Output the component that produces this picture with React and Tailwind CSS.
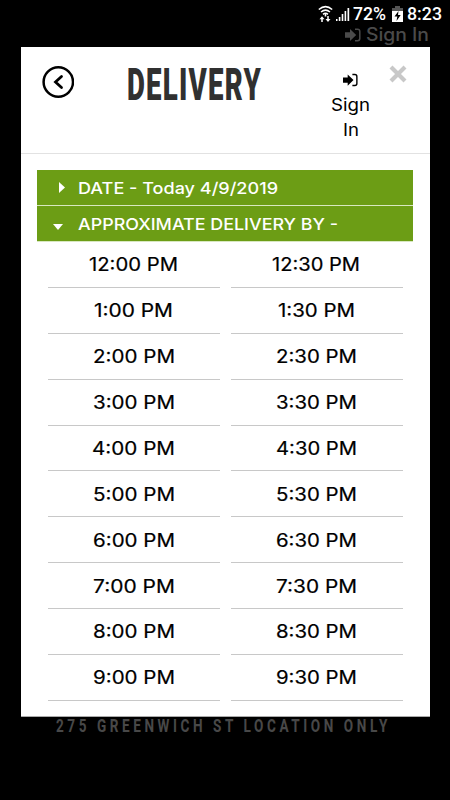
import { useLayoutEffect, useRef, useState } from "react";

const times = [
  ["12:00 PM", "12:30 PM", 89, 88], ["1:00 PM", "1:30 PM", 79, 77],
  ["2:00 PM", "2:30 PM", 82, 81], ["3:00 PM", "3:30 PM", 82, 81],
  ["4:00 PM", "4:30 PM", 83, 81], ["5:00 PM", "5:30 PM", 82, 81],
  ["6:00 PM", "6:30 PM", 82, 81], ["7:00 PM", "7:30 PM", 82, 81],
  ["8:00 PM", "8:30 PM", 82, 81], ["9:00 PM", "9:30 PM", 82, 81],
];

// Stretches a line of text horizontally to an exact width.
function Fit({ width, className = "", children }) {
  const ref = useRef(null);
  const [scale, setScale] = useState(1);
  useLayoutEffect(() => {
    setScale(width / ref.current.getBoundingClientRect().width * scale);
  }, [width]);
  return (
    <span className={"block shrink-0 whitespace-nowrap " + className} style={{ width }}>
      <span ref={ref} className="inline-block origin-left" style={{ transform: `scaleX(${scale})` }}>{children}</span>
    </span>
  );
}

function SignInIcon({ className }) {
  return (
    <svg viewBox="0 0 16 14" className={className}>
      <path d="M0 4.200h5V1l6.200 6L5 13V9.800H0z" fill="currentColor" />
      <path d="M10 1.200h2.600q2.200 0 2.200 2.200v7.200q0 2.200-2.200 2.200H10" fill="none" stroke="currentColor" strokeWidth="1.500" />
    </svg>
  );
}

function StatusBar() {
  return (
    <div className="flex h-[26px] items-center pt-px pl-[318px] text-white">
      <svg className="h-[18px] w-[15px] shrink-0" viewBox="0 0 15 18" fill="none" stroke="currentColor">
        <path d="M.8 4.5Q7.5-1.3 14.2 4.5M3 7Q7.5 3.2 12 7M5 9.3q2.500-2 5 0" strokeWidth="1.5" />
        <path d="M7.500 9v2.500" strokeWidth="1.6" />
        <path d="M4 17v-4M10 11v4" strokeWidth="1.5" />
        <path d="M1.500 14.200 4 11.200l2.500 3zM7.500 14 10 17l2.500-3z" fill="currentColor" stroke="none" />
      </svg>
      <svg className="ml-[3px] h-[14px] w-[14px] shrink-0" viewBox="0 0 14 14" fill="currentColor">
        <path d="M0 12h1.500v2H0zM2.800 10h1.600v4H2.800zM5.700 7h1.600v7H5.700zM8.600 4h1.600v10H8.600zM11.500 1h1.700v13h-1.700z" />
      </svg>
      <Fit width={33} className="ml-[3px] text-[18.5px] leading-[26px] font-medium">72%</Fit>
      <svg className="ml-[6px] h-[16px] w-[11px] shrink-0" viewBox="0 0 11 16">
        <path d="M3 0h5v2h3v3.500H0V2h3z" fill="#555" />
        <path d="M0 5h11v11H0z" fill="#fff" />
        <path d="M6.500 5 2.500 10.500h2.800L4.500 15 8.700 9H6z" fill="#000" />
      </svg>
      <Fit width={35} className="ml-[4px] text-[18.5px] leading-[26px] font-medium">8:23</Fit>
    </div>
  );
}

export default function App() {
  return (
    <div className="flex h-[800px] w-[450px] flex-col overflow-hidden bg-black font-['Roboto','Liberation_Sans',sans-serif]">
      <StatusBar />
      <div className="flex h-[21px] items-start pl-[345px] text-[#4a4a4a]">
        <SignInIcon className="mt-[2px] h-[14px] w-[16px] shrink-0" />
        <Fit width={63} className="ml-[5px] -mt-[3px] font-['Inter',sans-serif] text-[18px] leading-6 font-medium">Sign In</Fit>
      </div>
      <main className="ml-[21px] h-[670px] w-[409px] shrink-0 border-b border-[#aaa] bg-white font-['Inter',sans-serif] text-black">
        <header className="flex h-[107px] items-start border-b border-[#e2e2e2]">
          <svg className="mt-[19px] ml-[21px] size-8 shrink-0" viewBox="0 0 32 32" fill="none" stroke="currentColor">
            <circle cx="16.300" cy="16" r="14.700" strokeWidth="2.500" />
            <path d="M19.500 10.500 13.500 16l6 5.500" strokeWidth="2.800" strokeLinecap="round" />
          </svg>
          <Fit width={135} className="ml-[53px] mt-[8px] font-['Roboto',sans-serif] text-[45px] leading-[60px] font-black tracking-[2px] text-[#303030]">DELIVERY</Fit>
          <div className="ml-[67px] mt-[26px] flex w-[43px] flex-col items-center">
            <SignInIcon className="h-[14px] w-[15px]" />
            <Fit width={39} className="mt-[6px] text-[17px] leading-[25px]">Sign</Fit>
            <Fit width={16} className="text-[17px] leading-[25px]">In</Fit>
          </div>
          <svg className="mt-[18px] ml-[17px] size-[18px] shrink-0" viewBox="0 0 18 18" stroke="#c8c8c8" strokeWidth="4.200">
            <path d="m2 2 14 14M16 2 2 16" />
          </svg>
        </header>
        <section className="mt-[16px] ml-[16px] w-[376px] text-[16.5px] font-medium text-white">
          <div className="flex h-[36px] items-center border-b border-[#d8e8c0] bg-[#6c9d15]">
            <svg className="ml-[22px] h-[11px] w-[6px]" viewBox="0 0 6 10" preserveAspectRatio="none" fill="#fff"><path d="m0 0 6 5-6 5z" /></svg>
            <Fit width={200} className="ml-[13px] leading-[34px]">DATE - Today 4/9/2019</Fit>
          </div>
          <div className="flex h-[36px] items-center border-b border-[#d8e8c0] bg-[#6c9d15]">
            <svg className="mt-[7px] ml-[16px] h-[6px] w-[10px]" viewBox="0 0 10 6" fill="#fff"><path d="m0 0 5 6 5-6z" /></svg>
            <Fit width={260} className="ml-[15px] leading-[34px]">APPROXIMATE DELIVERY BY -</Fit>
          </div>
        </section>
        <section className="ml-[27px] flex w-[355px] flex-col text-[18px] font-normal [-webkit-text-stroke:0.2px_black]">
          {times.map(([left, right, lw, rw]) => (
            <div key={left} className="grid h-[45.88px] grid-cols-[172px_172px] gap-x-[11px]">
              <div className="flex items-center justify-center border-b border-[#c8c8c8] pt-px pr-px"><Fit width={lw}>{left}</Fit></div>
              <div className="flex items-center justify-center border-b border-[#c8c8c8] pt-px pr-[2px]"><Fit width={rw}>{right}</Fit></div>
            </div>
          ))}
        </section>
      </main>
      <footer className="-mt-px pl-[56px] font-['Roboto',sans-serif] text-[19px] leading-5 font-bold tracking-[5px] text-[#484848]">
        <Fit width={335}>275 GREENWICH ST LOCATION ONLY</Fit>
      </footer>
    </div>
  );
}
